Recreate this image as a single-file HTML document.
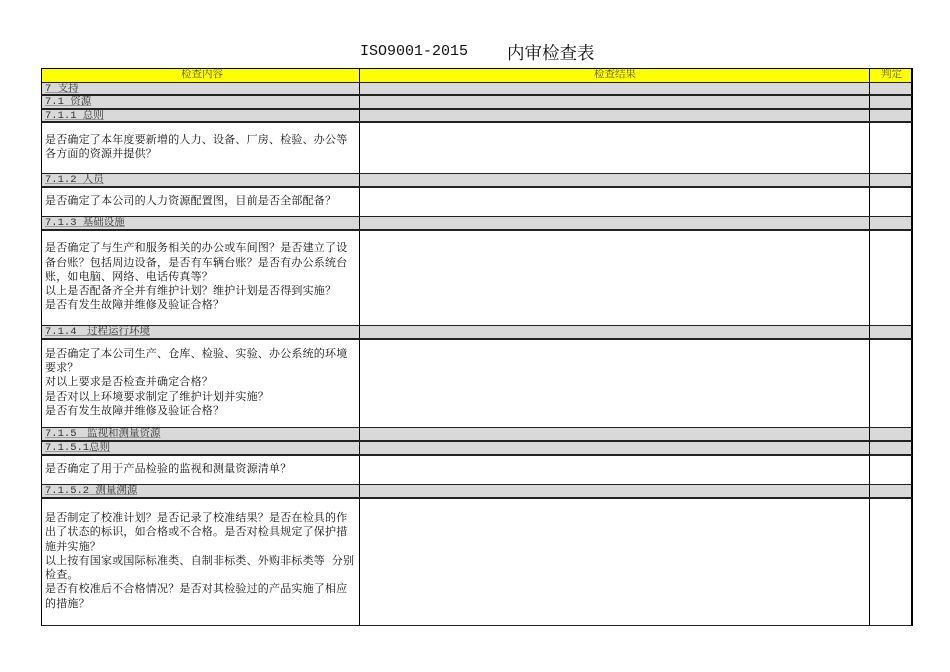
<!DOCTYPE html>
<html><head><meta charset="utf-8"><style>
body{margin:0;width:950px;height:672px;background:#fff;position:relative;font-family:"Liberation Mono","Noto Serif CJK SC",serif;overflow:hidden}
.t1{position:absolute;top:43px;left:360px;font-size:15px;color:#111;font-family:"Liberation Mono",monospace}
.t2{position:absolute;top:40px;left:507px;font-size:17.5px;color:#111;font-family:"Noto Serif CJK SC",serif}
.r{position:absolute;left:41px;width:872px;box-sizing:border-box;border-left:1px solid #000;border-right:2px solid #000;border-bottom:1px solid #222}
.r div{position:absolute;top:0;bottom:0;white-space:nowrap}
.c1{left:0;width:317px;padding-left:3px;box-sizing:border-box}
.c2{left:317px;width:510px;border-left:1px solid #000}
.c3{left:827px;width:43px;border-left:1px solid #000}
.g{background:#d9d9d9;font-size:10.5px;color:#333;line-height:12px;border-bottom:2px solid #222}
.g .c1{text-decoration:underline;text-decoration-color:#999}
.y{background:#ffff00;font-size:10.5px;color:#555500;line-height:13px;text-align:center;border-top:1px solid #000}
.w .c1{display:flex;align-items:center;font-size:11px;letter-spacing:0.2px;line-height:14.2px;color:#111}
</style></head><body>
<div class="t1">ISO9001-2015</div><div class="t2">内审检查表</div>
<div class="r y" style="top:68px;height:15px"><div class="c1">检查内容</div><div class="c2">检查结果</div><div class="c3">判定</div></div>
<div class="r g" style="top:83px;height:13px"><div class="c1">7 支持</div><div class="c2"></div><div class="c3"></div></div>
<div class="r g" style="top:96px;height:14px"><div class="c1">7.1 资源</div><div class="c2"></div><div class="c3"></div></div>
<div class="r g" style="top:110px;height:13px"><div class="c1">7.1.1 总则</div><div class="c2"></div><div class="c3"></div></div>
<div class="r w" style="top:123px;height:51px"><div class="c1">是否确定了本年度要新增的人力、设备、厂房、检验、办公等<br>各方面的资源并提供？</div><div class="c2"></div><div class="c3"></div></div>
<div class="r g" style="top:174px;height:14px"><div class="c1">7.1.2 人员</div><div class="c2"></div><div class="c3"></div></div>
<div class="r w" style="top:188px;height:29px"><div class="c1">是否确定了本公司的人力资源配置图，目前是否全部配备？</div><div class="c2"></div><div class="c3"></div></div>
<div class="r g" style="top:217px;height:14px"><div class="c1">7.1.3 基础设施</div><div class="c2"></div><div class="c3"></div></div>
<div class="r w" style="top:231px;height:95px"><div class="c1">是否确定了与生产和服务相关的办公或车间图？是否建立了设<br>备台账？包括周边设备，是否有车辆台账？是否有办公系统台<br>账，如电脑、网络、电话传真等？<br>以上是否配备齐全并有维护计划？维护计划是否得到实施？<br>是否有发生故障并维修及验证合格？</div><div class="c2"></div><div class="c3"></div></div>
<div class="r g" style="top:326px;height:14px"><div class="c1">7.1.4　过程运行环境</div><div class="c2"></div><div class="c3"></div></div>
<div class="r w" style="top:340px;height:88px"><div class="c1">是否确定了本公司生产、仓库、检验、实验、办公系统的环境<br>要求？<br>对以上要求是否检查并确定合格？<br>是否对以上环境要求制定了维护计划并实施？<br>是否有发生故障并维修及验证合格？</div><div class="c2"></div><div class="c3"></div></div>
<div class="r g" style="top:428px;height:14px"><div class="c1">7.1.5　监视和测量资源</div><div class="c2"></div><div class="c3"></div></div>
<div class="r g" style="top:442px;height:14px"><div class="c1">7.1.5.1总则</div><div class="c2"></div><div class="c3"></div></div>
<div class="r w" style="top:456px;height:29px"><div class="c1">是否确定了用于产品检验的监视和测量资源清单？</div><div class="c2"></div><div class="c3"></div></div>
<div class="r g" style="top:485px;height:14px"><div class="c1">7.1.5.2 测量溯源</div><div class="c2"></div><div class="c3"></div></div>
<div class="r w" style="top:499px;height:127px"><div class="c1">是否制定了校准计划？是否记录了校准结果？是否在检具的作<br>出了状态的标识，如合格或不合格。是否对检具规定了保护措<br>施并实施？<br>以上按有国家或国际标准类、自制非标类、外购非标类等 分别<br>检查。<br>是否有校准后不合格情况？是否对其检验过的产品实施了相应<br>的措施？</div><div class="c2"></div><div class="c3"></div></div>
</body></html>
